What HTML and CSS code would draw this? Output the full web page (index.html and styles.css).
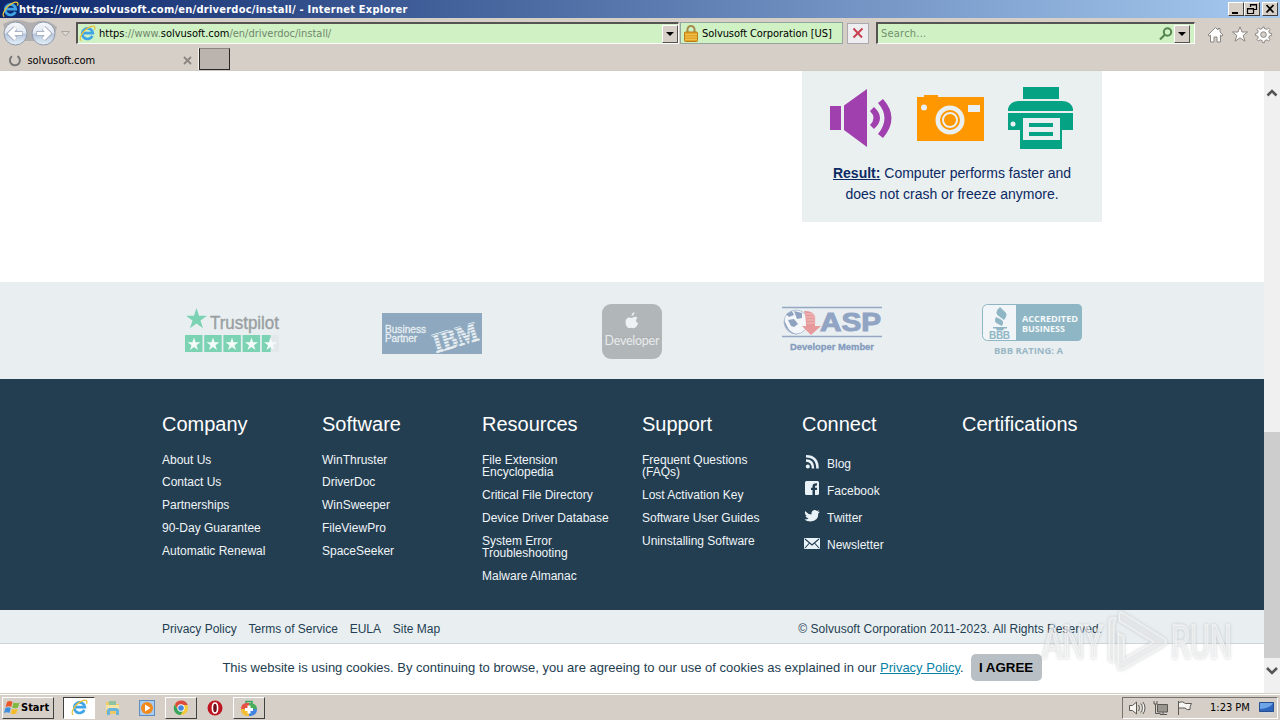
FILE: index.html
```html
<!DOCTYPE html>
<html lang="en">
<head>
<meta charset="utf-8">
<title>solvusoft.com</title>
<link rel="stylesheet" href="styles.css">
</head>
<body>
<svg width="0" height="0" class="defs">
  <defs>
    <symbol id="ie" viewBox="0 0 16 16">
      <path d="M12.6 10.2A5 5 0 1 1 13 7.6H4.4" fill="none" stroke="#3fa5e6" stroke-width="2.5"/>
      <path d="M2.2 14.6C-1 14 3 5.5 9.500 2.3 13.5.3 16 .8 14.6 4.4" fill="none" stroke="#e9c23c" stroke-width="1.2"/>
    </symbol>
    <symbol id="star" viewBox="0 0 20 20"><path d="M10 0l2.4 7.3H20l-6.2 4.5 2.4 7.4L10 14.7l-6.2 4.5 2.4-7.4L0 7.3h7.6z"/></symbol>
    <linearGradient id="orb" x1="0" y1="0" x2="0" y2="1"><stop offset="0" stop-color="#f6f8fb"/><stop offset=".48" stop-color="#e2e8f1"/><stop offset=".52" stop-color="#b6c5db"/><stop offset="1" stop-color="#e4f1fb"/></linearGradient>
  </defs>
</svg>
<div class="screen">
  <header class="titlebar">
    <svg class="title-ie" width="17" height="17"><use href="#ie"/></svg>
    <span class="title-text">https://www.solvusoft.com/en/driverdoc/install/ - Internet Explorer</span>
    <div class="winbtns">
      <span class="wbtn"><svg width="15" height="12"><path d="M3 9h6v2H3z"/></svg></span>
      <span class="wbtn"><svg width="15" height="12"><path d="M5.500 4V1.500h6v5H9M5 2h7M2.500 5.500h6v5h-6zM2 6h7" fill="none" stroke="#000" stroke-width="1.200"/></svg></span>
      <span class="wbtn last"><svg width="15" height="12"><path d="M3.500 2l7 7.500M10.500 2l-7 7.500" stroke="#000" stroke-width="1.800"/></svg></span>
    </div>
  </header>

  <div class="navbar">
    <svg class="arrows" width="76" height="30" viewBox="0 0 76 30">
      <path d="M3 6Q16-1 27 4q4 1 8 0 12-4 22 5l-4 14H8z" fill="#b1afb0"/>
      <circle cx="15.500" cy="15.500" r="11.500" fill="url(#orb)" stroke="#9099a8"/>
      <circle cx="43.500" cy="15.500" r="11.500" fill="url(#orb)" stroke="#9099a8"/>
      <path d="M22.500 15.500H10M15.500 10L10 15.500l5.500 5.500" fill="none" stroke="#8f9bb0" stroke-width="5"/>
      <path d="M22 15.500H10M15.500 10L10 15.500l5.500 5.500" fill="none" stroke="#fff" stroke-width="3.600"/>
      <path d="M36.500 15.500H49M43.500 10l5.500 5.500-5.500 5.500" fill="none" stroke="#8f9bb0" stroke-width="5"/>
      <path d="M37 15.500h12M43.500 10l5.500 5.500-5.500 5.500" fill="none" stroke="#fff" stroke-width="3.600"/>
      <path d="M61.500 13.500h8l-4 4.500z" fill="#dedad4" stroke="#aaa6a0"/>
    </svg>
    <div class="field address">
      <svg width="17" height="17"><use href="#ie"/></svg>
      <span class="url"><b>https</b>://www.<b>solvusoft.com</b>/en/driverdoc/install/</span>
      <span class="drop"><i></i></span>
    </div>
    <div class="cert">
      <svg width="14" height="17" viewBox="0 0 14 17"><path d="M3.500 8V4.500a3.500 3.500 0 0 1 7 0V8" fill="none" stroke="#a48a4b" stroke-width="2"/><rect x=".5" y="7" width="13" height="9.500" rx="1" fill="#e4a529" stroke="#b87b16"/><path d="M1 9.500h12M1 12h12M1 14.500h12" stroke="#f0c04e"/></svg>
      <span class="cert-text">Solvusoft Corporation [US]</span>
    </div>
    <div class="stop"><svg width="12" height="12" viewBox="0 0 12 12"><path d="M1.500 1.500L10 10.500M10.500 1.500L1.500 10.500" stroke="#c74352" stroke-width="2"/></svg></div>
    <div class="field search">
      <span class="ph">Search...</span>
      <svg width="14" height="14" viewBox="0 0 14 14"><circle cx="8.500" cy="5" r="3.700" fill="none" stroke="#568550" stroke-width="2"/><path d="M6 7.500L1 12.500" stroke="#568550" stroke-width="2.200"/></svg>
      <span class="drop"><i></i></span>
    </div>
    <svg class="tools" width="68" height="20" viewBox="0 0 68 20" fill="#fff" stroke="#8c8782">
      <path d="M1 10L8.500 2.500 11 5V3.500h2V7l3 3-1 1.200-1.500-1V17H10v-5H7v5H3.500v-6.800l-1.500 1z"/>
      <path d="M33 1.800l2 5.200h5.600l-4.400 3.500 1.700 5.700-4.900-3.300-4.900 3.300 1.700-5.700L25.400 7H31z"/>
      <path d="M56 2l1-.3.600 2 2.500.6L61.500 3l1.500 1.500-1.300 1.600.8 2 2.100.4v2l-2.100.4-.8 2 1.300 1.600-1.500 1.500-1.600-1.200-2 .8-.4 2h-2l-.4-2-2-.8-1.600 1.200-1.500-1.500 1.300-1.600-.8-2-2.100-.4v-2l2.100-.4.8-2L50 4.500 51.500 3l1.600 1.300 2-.7z"/><circle cx="56.500" cy="9.600" r="2.800" fill="#d5cfc8"/>
    </svg>
  </div>

  <div class="tabs">
    <div class="tab">
      <svg width="14" height="14" viewBox="0 0 14 14"><path d="M4 2.300A5 5 0 1 0 9.500 2.100" fill="none" stroke="#777" stroke-width="2"/></svg>
      <span class="tab-text">solvusoft.com</span>
      <svg class="tab-x" width="9" height="9" viewBox="0 0 9 9"><path d="M1 1l7 7M8 1L1 8" stroke="#8a8580" stroke-width="1.800"/></svg>
    </div>
    <div class="newtab"></div>
  </div>

  <div class="viewport">
    <main class="page">
      <section class="upper">
        <div class="container">
          <div class="card">
            <svg width="300" height="81" viewBox="0 0 300 81">
              <g fill="#a03fae"><path d="M28 35h11v24H28zM42 34.500L65 18v58L42 59z"/><path d="M72 36q12 11 0 22l-4-4q7-7 0-14zM81 28q17 19 0 39l-5-4q13-16 0-31z"/></g>
              <path d="M115 26h7v-2h14v2h46v44h-67z" fill="#ff9800"/><circle cx="122" cy="36.500" r="3" fill="#eaeff2"/><path d="M166 34h12v7h-12z" fill="#eaeff2"/><circle cx="148" cy="49" r="14.500" fill="#eaeff2"/><circle cx="148" cy="49" r="9" fill="none" stroke="#ff9800" stroke-width="2"/><circle cx="148" cy="49" r="6" fill="#ff9800"/>
              <g fill="#05a384"><path d="M221 16h36v12h-36z"/><path d="M206 40v-2q2-8 11-8h43q9 0 11 8v2zM206 42h65v17h-11v-11h-42v11h-12z"/><path d="M218 47h42v31h-42z"/></g>
              <path d="M221 47h37v22h-37z" fill="#eaeff2"/><path d="M227 52h24v4h-24zM227 61h24v4h-24z" fill="#05a384"/><circle cx="211" cy="53" r="2.500" fill="#eaeff2"/>
            </svg>
            <p><strong>Result:</strong> Computer performs faster and<br>does not crash or freeze anymore.</p>
          </div>
        </div>
      </section>

      <section class="partners">
        <svg width="100" height="60" viewBox="0 0 100 60">
          <svg x="4" y="8" width="21" height="21" viewBox="0 0 20 20" fill="#7bd3b3"><use href="#star"/></svg>
          <text x="28" y="29" class="tp" textLength="69" lengthAdjust="spacingAndGlyphs">Trustpilot</text>
          <path d="M3 35h17.500v17H3zM22.200 35h17.500v17H22.200zM41.400 35h17.500v17H41.400zM60.600 35h17.500v17H60.600zM79.800 35h9v17h-9z" fill="#7bd3b3"/><path d="M88.800 35H97v17h-8.200z" fill="#e3e8ea"/>
          <g fill="#f5fbfa"><use href="#star" x="5.500" y="37.500" width="13" height="13"/><use href="#star" x="24.500" y="37.500" width="13" height="13"/><use href="#star" x="43.500" y="37.500" width="13" height="13"/><use href="#star" x="63" y="37.500" width="13" height="13"/><use href="#star" x="82" y="37.500" width="13" height="13"/></g>
        </svg>
        <svg width="100" height="60" viewBox="0 0 100 60">
          <path d="M0 13h100v41H0z" fill="#8da8bf"/>
          <g fill="#e8eef2"><text x="3" y="33" class="biz" textLength="41">Business</text><text x="3" y="42" class="biz" textLength="32">Partner</text></g>
          <g transform="translate(54 53) rotate(-17)"><text class="ibm" textLength="46" lengthAdjust="spacingAndGlyphs">IBM</text><path d="M-2-2.500h51M-2-5.500h51M-2-8.500h51M-2-11.500h51M-2-14.500h51M-2-17.500h51" stroke="#8da8bf" stroke-width=".8"/></g>
        </svg>
        <svg width="100" height="60" viewBox="0 0 100 60">
          <rect x="20" y="4" width="60" height="55" rx="9" fill="#b1b6b8"/><path d="M20 38h60" stroke="#a6abad"/>
          <path d="M50 18q-6-2-6.500 4 .5 6 4 6.300 2-1 4 0 3-.3 4.700-5-4-2-.8-5.500-2-2.400-5.400.2zM49.500 16q0-3 3-4 0 3-3 4z" fill="#eef2f4"/>
          <text x="22.500" y="45" class="dev" textLength="55">Developer</text>
        </svg>
        <svg width="100" height="60" viewBox="0 0 100 60">
          <path d="M0 7.500h100M0 36.500h100" stroke="#95a7c3" stroke-width="1.500"/>
          <circle cx="14" cy="22" r="12" fill="#f4f7fa" stroke="#b6c3d5"/><path d="M2 20q0 12 14 15-9-3-11-9zM4 14l6-3 2 4-5 2zM6 20l6-1 4 5-4 3-3-1zM12 11l8 2v5l-5 1z" fill="#8fa2c0"/>
          <path d="M22 11q9-1 11 6v9h6L29 35l-9-9h4q0-9-2-15z" fill="#e69a9c"/><path d="M23 14h10M24 17h10M25 20h9M25 23h9" stroke="#f2c8ca" stroke-width=".8"/>
          <text x="38" y="31" class="asp" textLength="61" lengthAdjust="spacingAndGlyphs">ASP</text>
          <text x="8" y="50" class="aspm" textLength="84" lengthAdjust="spacingAndGlyphs">Developer Member</text>
        </svg>
        <svg width="100" height="60" viewBox="0 0 100 60">
          <rect x=".5" y="4.500" width="99" height="36" rx="5" fill="#f1f5f7" stroke="#8fb6c4"/><path d="M34 4h61q5 0 5 5v27q0 5-5 5H34z" fill="#8fb6c4"/>
          <path d="M18 7q-7 6 0 10l4 3q5-6 0-9zM14 17q-3 5 2 7l4 2q3-5-2-7zM11 27h14v1.500h-3l-1 2h-6l-1-2h-3z" fill="#8fb6c4"/>
          <text x="7" y="39" class="bbb" textLength="21">BBB</text>
          <text x="40" y="22" class="acc" textLength="56" lengthAdjust="spacingAndGlyphs">ACCREDITED</text><text x="40" y="32" class="acc" textLength="43" lengthAdjust="spacingAndGlyphs">BUSINESS</text>
          <text x="12" y="54" class="rating" textLength="69" lengthAdjust="spacingAndGlyphs">BBB RATING: A</text>
        </svg>
      </section>

      <footer class="footer">
        <div class="col"><h3>Company</h3><ul><li>About Us</li><li>Contact Us</li><li>Partnerships</li><li>90-Day Guarantee</li><li>Automatic Renewal</li></ul></div>
        <div class="col"><h3>Software</h3><ul><li>WinThruster</li><li>DriverDoc</li><li>WinSweeper</li><li>FileViewPro</li><li>SpaceSeeker</li></ul></div>
        <div class="col"><h3>Resources</h3><ul><li>File Extension<br>Encyclopedia</li><li>Critical File Directory</li><li>Device Driver Database</li><li>System Error<br>Troubleshooting</li><li>Malware Almanac</li></ul></div>
        <div class="col"><h3>Support</h3><ul><li>Frequent Questions<br>(FAQs)</li><li>Lost Activation Key</li><li>Software User Guides</li><li>Uninstalling Software</li></ul></div>
        <div class="col connect"><h3>Connect</h3><ul>
          <li><svg width="18" height="18" viewBox="0 0 18 18"><circle cx="5.800" cy="13.500" r="2" fill="#e9f2f7"/><path d="M4 7.500q7 0 7 8M4 3.200q11.500 0 11.500 12.300" fill="none" stroke="#e9f2f7" stroke-width="2.600"/></svg>Blog</li>
          <li><svg width="18" height="18" viewBox="0 0 18 18"><path d="M4.500 1h11q1.500 0 1.500 1.500v11q0 1.500-1.500 1.500H13v-5h2V7.800h-2V6.500q0-1 2-1V3.300q-4.500-.3-4.500 3v1.500H9V10h1.500v5h-6Q3 15 3 13.500v-11Q3 1 4.500 1z" fill="#e9f2f7"/></svg>Facebook</li>
          <li><svg width="18" height="18" viewBox="0 0 18 18"><path d="M3 4q3 3.400 6.500 3.500Q9 3.500 12.500 3q1.500 0 2.500 1l2-.8-1 1.800 1.800-.3L16.300 6.500Q16.500 14 8.500 14.500q-4 0-6-2 3 0 4-1.300-2.500-.3-3-2.200h1.300Q2.500 8 3 4z" fill="#e9f2f7"/></svg>Twitter</li>
          <li><svg width="18" height="18" viewBox="0 0 18 18"><rect x="2" y="4" width="16" height="11" rx="1" fill="#e9f2f7"/><path d="M3 5l7 6 7-6M3 14l4.500-5M17 14l-4.500-5" fill="none" stroke="#243e51" stroke-width="1.100"/></svg>Newsletter</li>
        </ul></div>
        <div class="col"><h3>Certifications</h3></div>
      </footer>

      <div class="legal">
        <nav><span>Privacy Policy</span><span>Terms of Service</span><span>EULA</span><span>Site Map</span></nav>
        <span class="copy">© Solvusoft Corporation 2011-2023. All Rights Reserved.</span>
      </div>

      <div class="cookies">
        <span>This website is using cookies. By continuing to browse, you are agreeing to our use of cookies as explained in our <a>Privacy Policy</a>.</span>
        <button>I AGREE</button>
      </div>
    </main>
    <aside class="scroll">
      <svg class="up" width="16" height="17" viewBox="0 0 16 17"><path d="M3.500 11.500L8 7l4.500 4.500" fill="none" stroke="#555" stroke-width="2.600"/></svg>
      <div class="thumb"></div>
      <svg width="16" height="17" viewBox="0 0 16 17"><path d="M3 7l5 5 5-5" fill="none" stroke="#555" stroke-width="2.600"/></svg>
    </aside>
  </div>

  <div class="taskbar">
    <div class="start">
      <svg width="16" height="16" viewBox="0 0 16 16"><path d="M3 2q3-2 5.500 0L7.200 7Q5 5.500 1.500 7z" fill="#e8582b"/><path d="M9.500 2.500q3 1.500 6 0L14 7.500q-3 1.500-5.800 0z" fill="#7fb93d"/><path d="M1.200 8.200q3-1.700 5.600 0L5.500 13Q3 11.500 0 13z" fill="#3f8fe0"/><path d="M8 8.700q3 1.500 5.700 0L12.300 13.500q-3 1.500-5.600 0z" fill="#f5bd2d"/></svg>
      <span>Start</span>
    </div>
    <div class="task active"><svg width="17" height="17"><use href="#ie"/></svg></div>
    <div class="task flat"><svg width="18" height="18" viewBox="0 0 18 18"><path d="M2 3h6l1 2h6v10H2z" fill="#eec965"/><path d="M5 2h7v4H5z" fill="#8fc39b"/><path d="M2 6h13v5H2z" fill="#f6e4a4"/><path d="M3 16v-4q0-3 3-3h6q3 0 3 3v4h-3v-4H6v4z" fill="#69b4dc"/></svg></div>
    <div class="task flat"><svg width="18" height="18" viewBox="0 0 18 18"><rect x="1.500" y="1.500" width="15" height="15" fill="#a9cdf0" stroke="#5c8cc0"/><circle cx="9" cy="9" r="6" fill="#f18a1d"/><path d="M7 5.500L12.500 9 7 12.500z" fill="#fff"/></svg></div>
    <div class="task"><svg width="18" height="18" viewBox="0 0 18 18"><circle cx="9" cy="9" r="7" fill="#f6c935"/><path d="M3 5.300A7 7 0 0 1 15.700 6H9L6 11z" fill="#dd4b3e"/><path d="M2.700 5.500A7 7 0 0 0 8.500 16l3-5H6z" fill="#36a35a"/><circle cx="9" cy="9" r="3.700" fill="#fff"/><circle cx="9" cy="9" r="2.800" fill="#4286e0"/></svg></div>
    <div class="task flat"><svg width="18" height="18" viewBox="0 0 18 18"><circle cx="9" cy="9" r="7.500" fill="#c01420"/><ellipse cx="9" cy="9" rx="2.600" ry="5" fill="#70101a" stroke="#fff" stroke-width="1.600"/></svg></div>
    <div class="task"><svg width="18" height="18" viewBox="0 0 18 18"><path d="M6 5V2.500h6V5" fill="none" stroke="#3aa45c" stroke-width="1.500"/><path d="M9 4h2q6 1 6 6H9z" fill="#46ad5a"/><path d="M1 10q0-6 6-6h2v6z" fill="#e65243"/><path d="M1 10h8v7H7q-6-1-6-7z" fill="#f4bd34"/><path d="M9 10h8q0 6-6 7H9z" fill="#4285e0"/><path d="M7.500 6.500h3v2.500H13v3h-2.500v2.500h-3V12H5V9h2.500z" fill="#fff"/></svg></div>
    <div class="tray">
      <svg width="70" height="18" viewBox="0 0 70 18" fill="#f6f5f2" stroke="#5b5854">
        <path d="M1.500 6.500h3L8.500 3v12l-4-3.500h-3zM10.500 6q2 3 0 6M12.700 4.500q3.300 4.500 0 9M15 3q4 6 0 12"/>
        <path d="M29.500 5.500h10v7.500h-10z" fill="#99968f"/><path d="M26 2v3h3V2M27.500 5v9.500h5M32 15.500h7M35 13v2" fill="none"/>
        <path d="M50.500 2v14M50.500 3.500q4-2 7 1h6q-2 3-1.500 6-3 1-5-1.500h-6.500z"/>
      </svg>
      <span class="clock">1:23 PM</span>
      <svg width="17" height="16" viewBox="0 0 17 16"><path d="M1.500 2.500h14v9h-14z" fill="#2e66be" stroke="#254f8e"/><path d="M2 3h13q-2 5-13 6z" fill="#6da5e6"/><path d="M4 13.500h11" stroke="#cfd4da" stroke-width="2"/></svg>
    </div>
  </div>

  <svg class="watermark" width="204" height="66" viewBox="0 0 204 66">
    <g class="wm"><text x="5" y="49" textLength="61" lengthAdjust="spacingAndGlyphs">ANY</text><text x="134" y="49" textLength="61" lengthAdjust="spacingAndGlyphs">RUN</text>
    <path d="M85 3l43 27q3 3 0 6L86 60q-4 2-5-2V24l6 3v23l29-17-34-21V7q0-5 3-4zM79 9q-7-2-7 4v36q0 4 5 4V17z"/></g>
  </svg>
</div>
</body>
</html>
```

FILE: styles.css
```css
* { box-sizing: border-box; }
body { margin: 0; font-family: "Liberation Sans", Arial, sans-serif; }
svg { display: block; flex: none; }
.defs { position: absolute; }
.screen { position: relative; width: 1280px; height: 720px; overflow: hidden; display: flex; flex-direction: column; background: #d6cfc8; }
.titlebar, .navbar, .tabs, .taskbar { font-family: "DejaVu Sans Condensed", "DejaVu Sans", sans-serif; font-stretch: condensed; white-space: nowrap; flex: none; }

.titlebar { height: 18px; display: flex; align-items: center; background: linear-gradient(90deg, #0d286c, #a6caf0); color: #fff; padding: 0 2px; }
.title-text { font-size: 11px; font-weight: bold; letter-spacing: .25px; }
.winbtns { margin-left: auto; display: flex; }
.wbtn { width: 16px; height: 14px; background: #d6cfc8; border: 1px solid; border-color: #fff #404040 #404040 #fff; overflow: hidden; }
.wbtn.last { margin-left: 2px; }

.navbar { height: 30px; display: flex; align-items: center; }
.field { height: 22px; background: #cff1c4; border: 1px solid #fff; border-top: 2px solid #565452; border-left: 2px solid #565452; display: flex; align-items: center; }
.address { width: 603px; padding-left: 1px; font-size: 11px; }
.url { margin-left: 3px; color: #71876d; letter-spacing: -.01px; }
.url b { font-weight: normal; color: #000; }
.drop { width: 16px; height: 18px; background: #d6cfc8; border: 1px solid; border-color: #fff #55524e #55524e #fff; margin-left: auto; display: flex; align-items: center; justify-content: center; }
.drop i { border: 4px solid transparent; border-top-color: #000; border-bottom: 0; }
.cert { width: 163px; height: 22px; margin-left: 1px; border: 1px solid #94a5a0; background: #cff1c4; display: flex; align-items: center; padding-left: 3px; font-size: 11px; }
.cert-text { margin-left: 4px; letter-spacing: -.07px; }
.stop { width: 22px; height: 21px; margin-left: 4px; border: 1px solid #aaa9b0; background: #eeedf0; display: flex; align-items: center; justify-content: center; }
.search { width: 319px; margin-left: 7px; padding-left: 3px; padding-right: 4px; font-size: 11px; color: #71906c; }
.ph { letter-spacing: .22px; }
.search svg { margin-left: auto; margin-right: 1px; }
.search .drop { margin-left: 0; }
.tools { margin-left: 12px; margin-top: 3px; }

.tabs { height: 23px; display: flex; border-bottom: 1px solid #cfcac4; }
.tab { width: 199px; display: flex; align-items: center; padding: 3px 6px 0 8px; font-size: 11px; border-right: 1px solid #f4f1ee; }
.tab-text { margin-left: 5.500px; letter-spacing: -.1px; }
.tab-x { margin-left: auto; }
.newtab { width: 31px; height: 22px; background: #bab3ae; border: 1px solid #292725; border-top-color: #8a8682; }

.viewport { flex: none; height: 622px; display: flex; background: #fff; }
.page { width: 1264px; }
.upper { height: 211px; }
.container { width: 940px; margin-left: 162px; display: flex; justify-content: flex-end; }
.card { width: 300px; height: 151px; background: #eaeff0; text-align: center; color: #0b2a63; }
.card p { margin: 11px 0 0; font-size: 14px; line-height: 21px; }
.card strong { text-decoration: underline; }

.partners { height: 97px; background: #e9eff1; padding: 18px 0 0 182px; display: flex; gap: 100px; }
.tp { font: 17.500px "Liberation Sans"; fill: #9a9fa2; stroke: #9a9fa2; stroke-width: .4px; }
.biz { font: 10px "Liberation Sans"; stroke: #e8eef2; stroke-width: .3px; }
.ibm { font: bold 28px "Liberation Serif"; fill: #e8eef2; stroke: #e8eef2; stroke-width: .8px; }
.dev { font: 12.500px Lato; fill: #e7ebed; }
.asp { font: 900 25px "Liberation Sans"; fill: #91a4c4; stroke: #91a4c4; }
.aspm { font: bold 9.500px "Liberation Sans"; fill: #849bbd; stroke: #849bbd; stroke-width: .3px; }
.bbb { font: bold 10px "Liberation Sans"; fill: #8fb6c4; }
.acc { font: bold 8.500px "Open Sans"; fill: #f3f8fa; }
.rating { font: bold 8.500px "Open Sans"; fill: #9ab7c5; }

.footer { height: 231px; background: #243e51; color: #fff; padding: 33px 0 0 162px; display: flex; }
.col { width: 160px; }
.col h3 { margin: 0 0 17.650px; font-size: 20px; line-height: 24px; font-weight: normal; }
.col ul { list-style: none; margin: 0; padding: 0; font-size: 12px; line-height: 12.600px; }
.col li { margin-bottom: 10.200px; color: #eff5f8; }
.connect h3 { margin-bottom: 18px; }
.connect li { height: 27px; margin: 0; display: flex; align-items: center; gap: 7px; }
.connect ul { margin-top: -4px; line-height: 12px; }
.connect li svg { margin-top: -4px; }

.legal { height: 34px; background: #e9eff1; border-bottom: 1px solid #cfd5d8; color: #243e51; font-size: 12px; padding: 4px 162px 0; display: flex; justify-content: space-between; align-items: center; }
.legal nav { display: flex; gap: 11.800px; }
.copy { letter-spacing: .03px; }
.cookies { height: 49px; padding-bottom: 2px; color: #243e51; font-size: 13px; display: flex; align-items: center; justify-content: center; }
.cookies a { color: #0782a5; text-decoration: underline; }
.cookies button { width: 71px; height: 27px; margin-left: 7px; padding: 0; border: 0; border-radius: 5px; background: #b9c0c5; color: #000; font: bold 13.333px "Liberation Sans"; }
.scroll { width: 16px; background: #f0f0f0; display: flex; flex-direction: column; }
.up { margin-top: 13px; }
.thumb { margin-top: 331px; height: 226px; background: #cdcdcd; }
.scroll svg:last-child { margin-top: 3px; }

.taskbar { height: 27px; border-top: 1px solid #d6cfc8; box-shadow: inset 0 1px #fff; display: flex; align-items: center; padding: 1px 2px 0; }
.start { width: 52px; height: 22px; display: flex; align-items: center; gap: 1px; border: 1px solid; border-color: #fff #404040 #404040 #fff; font-size: 11px; font-weight: bold; padding-left: 1px; margin-right: 9px; }
.task { width: 32px; height: 22px; display: flex; align-items: center; justify-content: center; border: 1px solid; border-color: #fff #404040 #404040 #fff; margin-right: 2px; }
.task.active { background: #fff; border-color: #404040 #fff #fff #404040; }
.task.flat { border-color: transparent; }
.tray { width: 156px; height: 22px; margin-left: auto; border: 1px solid; border-color: #77736e #fff #fff #77736e; display: flex; align-items: center; padding: 0 2px 0 5px; }
.clock { font-size: 11px; margin-left: 12px; margin-right: auto; }

.watermark { position: absolute; left: 1037px; top: 609px; }
.wm { font: 46px Roboto; fill: rgba(255,255,255,.5); stroke: rgba(255,255,255,.45); stroke-width: 2px; filter: drop-shadow(0 0 1.5px rgba(110,115,120,.55)); }
```
